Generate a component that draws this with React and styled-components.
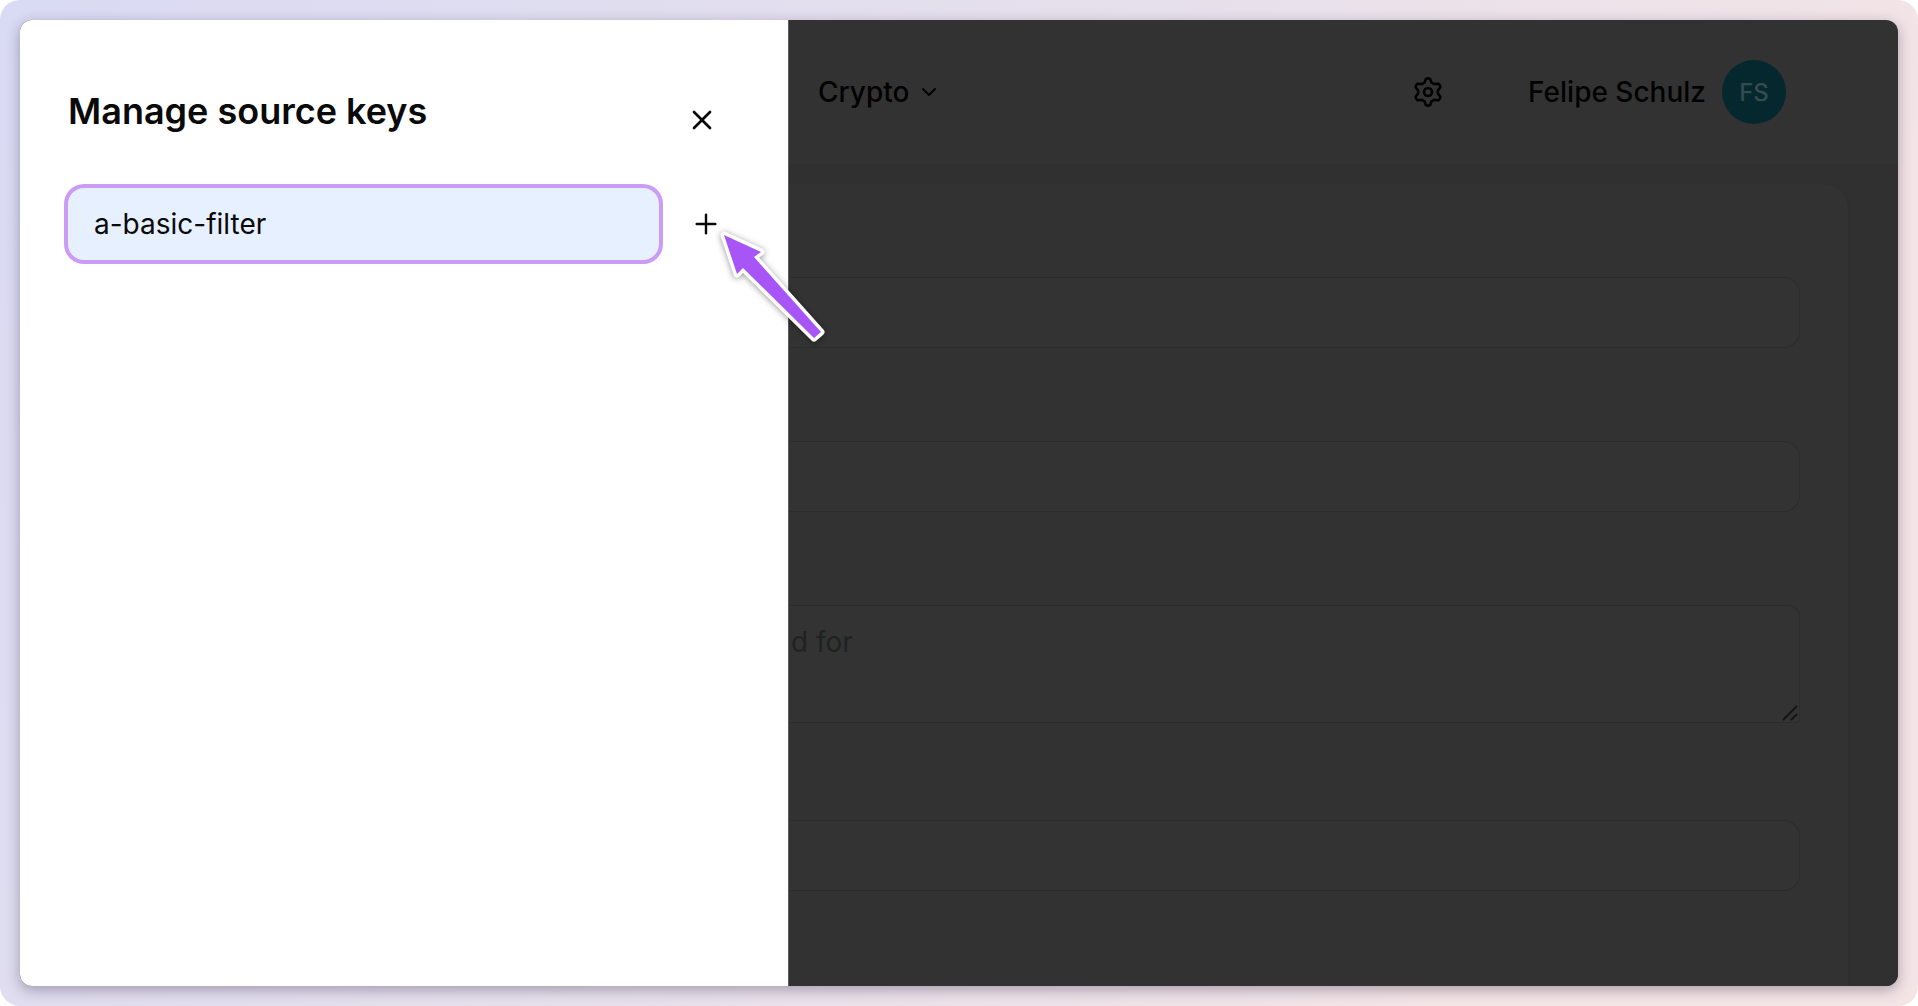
import React, { useState } from "react";
import styled, { createGlobalStyle } from "styled-components";
import { ChevronDown, Plus, X } from "lucide-react";

const App = () => {
  const [sourceKey, setSourceKey] = useState("a-basic-filter");

  return (
    <>
      <GlobalStyle />
      <Backdrop>
        <Window>
          <Drawer aria-label="Manage source keys">
            <DrawerHeader>
              <DrawerTitle>Manage source keys</DrawerTitle>
              <IconButton aria-label="Close">
                <X size={32} />
              </IconButton>
            </DrawerHeader>
            <KeyRow>
              <KeyInput
                aria-label="Source key"
                value={sourceKey}
                onChange={(e) => setSourceKey(e.target.value)}
              />
              <AddKey>
                <IconButton aria-label="Add source key">
                  <Plus size={32} strokeWidth={1.8} />
                </IconButton>
                <Pointer />
              </AddKey>
            </KeyRow>
          </Drawer>

          <Page>
            <TopBar>
              <ProjectButton>
                Crypto
                <ChevronDown size={24} />
              </ProjectButton>
              <TopBarRight>
                <SettingsButton aria-label="Settings">
                  <GearIcon />
                </SettingsButton>
                <User>
                  Felipe Schulz
                  <Avatar>FS</Avatar>
                </User>
              </TopBarRight>
            </TopBar>
            <Content>
              <Card>
                <Field aria-label="Name" />
                <Field aria-label="Key" />
                <AreaWrap>
                  <Area aria-label="Description" placeholder="d for" />
                  <ResizeGrip />
                </AreaWrap>
                <Field aria-label="Source" />
              </Card>
            </Content>
          </Page>
        </Window>
      </Backdrop>
    </>
  );
};

export default App;

const GearIcon = () => (
  <svg
    width="32"
    height="32"
    viewBox="0 0 32 32"
    fill="none"
    stroke="currentColor"
    strokeWidth="2.6"
    strokeLinejoin="round"
    aria-hidden="true"
  >
    <path d="M13.9 2.9 Q16 1.8 18.1 2.9 L19.6 6.7 Q20.9 7.5 22.3 8.2 L26.3 7.6 Q28.3 8.9 28.4 11.2 L25.9 14.4 Q25.6 16 25.9 17.6 L28.4 20.8 Q28.3 23.1 26.3 24.4 L22.3 23.8 Q20.9 24.5 19.6 25.3 L18.1 29.1 Q16 30.2 13.9 29.1 L12.4 25.3 Q11.1 24.5 9.7 23.8 L5.7 24.4 Q3.7 23.1 3.6 20.8 L6.1 17.6 Q6.4 16 6.1 14.4 L3.6 11.2 Q3.7 8.9 5.7 7.6 L9.7 8.2 Q11.1 7.5 12.4 6.7 Z" />
    <circle cx="16" cy="16" r="4" />
  </svg>
);

const Pointer = () => (
  <PointerSvg width="120" height="120" viewBox="0 0 120 120" aria-hidden="true">
    <path
      d="M10 10 L47 27 L40 32 L107 107 L100 113 L29 43 L23 49 Z"
      fill="#a855f7"
      stroke="#ffffff"
      strokeWidth="7"
      strokeLinejoin="round"
      paintOrder="stroke"
    />
  </PointerSvg>
);

const ResizeGrip = () => (
  <GripSvg width="16" height="16" viewBox="0 0 16 16" aria-hidden="true">
    <path d="M1 15 L15 1 M9 15 L15 9" stroke="#151515" strokeWidth="2" />
  </GripSvg>
);

// Styled Components
const GlobalStyle = createGlobalStyle`
  * {
    box-sizing: border-box;
  }

  body {
    margin: 0;
    background: #ffffff;
    font-family: Inter, "Liberation Sans", sans-serif;
    font-size: 28px;
    color: #0a0a0a;
  }

  button, input, textarea {
    font: inherit;
    color: inherit;
  }
`;

const Backdrop = styled.div`
  min-height: 100vh;
  display: flex;
  padding: 20px;
  border-radius: 20px;
  background: linear-gradient(120deg, #d9daf4 0%, #e6e0ec 45%, #f3e4e6 80%);
`;

const Window = styled.div`
  flex: 1;
  display: flex;
  min-width: 0;
  border-radius: 12px;
  overflow: hidden;
  background: #323232;
  box-shadow: 0 4px 14px rgba(40, 30, 60, 0.35);
`;

const Drawer = styled.aside`
  flex: 0 1 768px;
  padding: 71px 48px 48px;
  background: #ffffff;
`;

const DrawerHeader = styled.header`
  display: flex;
  justify-content: space-between;
  align-items: flex-end;
  padding-right: 4px;
  margin-bottom: 52px;
`;

const DrawerTitle = styled.h2`
  margin: 0;
  padding-bottom: 5px;
  font-size: 36px;
  line-height: 40px;
  font-weight: 600;
`;

const IconButton = styled.button`
  display: flex;
  align-items: center;
  justify-content: center;
  width: 68px;
  padding: 0;
  border: none;
  background: transparent;
  cursor: pointer;
`;

const KeyRow = styled.div`
  display: flex;
  align-items: center;
  gap: 13px;
`;

const KeyInput = styled.input`
  flex: 1;
  min-width: 0;
  height: 72px;
  padding: 0 26px;
  border: none;
  border-radius: 16px;
  outline: none;
  background: #e7f0fe;
  box-shadow: 0 0 0 4px #cb9bf5;
`;

const AddKey = styled.div`
  position: relative;
`;

/* Floats over the drawer edge and points at the add button */
const PointerSvg = styled.svg`
  position: absolute;
  left: 42px;
  top: 17px;
  filter: drop-shadow(0 1px 3px rgba(0, 0, 0, 0.4));
  pointer-events: none;
`;

const Page = styled.main`
  flex: 1;
  display: flex;
  flex-direction: column;
  min-width: 0;
  border-left: 1px solid #5c5c5c;
  color: #020202;
`;

const TopBar = styled.header`
  display: flex;
  align-items: center;
  justify-content: space-between;
  height: 144px;
  padding: 0 112px 0 29px;
  font-weight: 500;
`;

const ProjectButton = styled.button`
  display: flex;
  align-items: center;
  gap: 8px;
  padding: 0;
  border: none;
  background: transparent;
`;

const TopBarRight = styled.div`
  display: flex;
  align-items: center;
  gap: 84px;
`;

const SettingsButton = styled(IconButton)`
  width: 32px;
`;

const User = styled.div`
  display: flex;
  align-items: center;
  gap: 16px;
`;

const Avatar = styled.span`
  display: flex;
  align-items: center;
  justify-content: center;
  width: 64px;
  height: 64px;
  border-radius: 50%;
  background: #04282d;
  color: #364b4f;
  font-size: 24px;
`;

const Content = styled.div`
  flex: 1;
  display: flex;
  padding: 20px 48px 0 0;
  background: #303030;
`;

const Card = styled.section`
  flex: 1;
  display: flex;
  flex-direction: column;
  gap: 93px;
  padding: 93px 48px 0 0;
  border-right: 2px solid #2e2e2e;
  border-radius: 0 24px 0 0;
  background: #323232;
`;

const Field = styled.input`
  width: 100%;
  height: 71px;
  border: 1px solid #2c2c2c;
  border-left: none;
  border-radius: 0 16px 16px 0;
  outline: none;
  background: #333333;
`;

const AreaWrap = styled.div`
  position: relative;
  display: flex;
  margin-bottom: 4px;
`;

const Area = styled.textarea`
  flex: 1;
  height: 118px;
  padding: 19px 2px;
  border: 1px solid #2c2c2c;
  border-left: none;
  border-radius: 0 12px 4px 0;
  outline: none;
  resize: none;
  background: #333333;

  &::placeholder {
    color: #1f2222;
  }
`;

const GripSvg = styled.svg`
  position: absolute;
  right: 2px;
  bottom: 2px;
  fill: none;
`;
